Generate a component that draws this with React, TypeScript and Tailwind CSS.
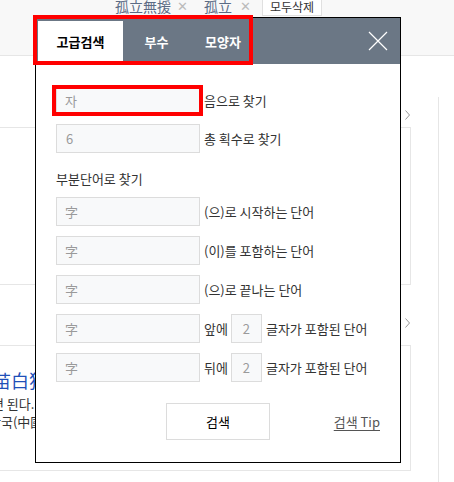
import React from 'react';

const KR = "font-['Noto_Sans_CJK_KR','Noto_Sans',sans-serif]";

const rows = [
  { label: '(으)로 시작하는 단어' },
  { label: '(이)를 포함하는 단어' },
  { label: '(으)로 끝나는 단어' },
  { label: '글자가 포함된 단어', pre: '앞에' },
  { label: '글자가 포함된 단어', pre: '뒤에' },
];

const Field: React.FC<{ value: string; className?: string }> = ({ value, className }) => (
  <div className={`h-[29px] border border-[#dcdcdc] bg-[#f8f9fa] text-[13px] text-[#9a9a9a] flex items-center ${className ?? ''}`}>
    {value}
  </div>
);

const More: React.FC = () => (
  <div className="flex items-center">
    <span className="w-[1px] h-[10px] bg-[#4a7fc1] mr-[5px]" />
    <svg width="5" height="10" viewBox="0 0 5 10">
      <path d="M0.5 0.5L4.5 5L0.5 9.5" stroke="#999" strokeWidth="1" fill="none" />
    </svg>
  </div>
);

const SearchModal: React.FC = () => (
  <div className="absolute left-[35px] top-[17px] w-[366px] h-[446px] bg-white border border-black flex flex-col">
    <div className="h-[46px] bg-[#6b7785] flex items-stretch pl-[2px] pt-[3px] pb-[2px] relative">
      <div className="w-[85px] bg-white text-black font-bold text-[13px] flex items-center justify-center">고급검색</div>
      <div className="w-[67px] text-white font-bold text-[13px] flex items-center justify-center">부수</div>
      <div className="w-[66px] text-white font-bold text-[13px] flex items-center justify-center">모양자</div>
      <svg className="absolute right-[12px] top-[13px]" width="20" height="20" viewBox="0 0 20 20">
        <path d="M1 1L19 19M19 1L1 19" stroke="white" strokeWidth="1.2" fill="none" />
      </svg>
    </div>

    <div className="flex flex-col pl-[20px] pr-[20px] pt-[22px]">
      <div className="flex items-center">
        <Field value="자" className="w-[144px] pl-[8px]" />
        <span className="ml-[4px] text-[13px] text-[#333]">음으로 찾기</span>
      </div>
      <div className="flex items-center mt-[9px]">
        <Field value="6" className="w-[144px] pl-[9px]" />
        <span className="ml-[4px] text-[13px] text-[#333]">총 획수로 찾기</span>
      </div>
      <div className="mt-[17px] text-[13px] text-[#333] leading-[18px]">부분단어로 찾기</div>
      <div className="flex flex-col gap-[10px] mt-[9px]">
        {rows.map((r, i) => (
          <div key={i} className="flex items-center">
            <Field value="字" className="w-[144px] pl-[8px] text-[12px]" />
            {r.pre ? (
              <>
                <span className="ml-[4px] text-[13px] text-[#333]">{r.pre}</span>
                <Field value="2" className="w-[31px] ml-[3px] justify-center" />
                <span className="ml-[4px] text-[13px] text-[#333]">{r.label}</span>
              </>
            ) : (
              <span className="ml-[4px] text-[13px] text-[#333]">{r.label}</span>
            )}
          </div>
        ))}
      </div>
      <div className="relative mt-[21px] flex justify-center">
        <button className="w-[104px] h-[37px] border border-[#dcdcdc] bg-white text-[13px] text-black">검색</button>
        <span className="absolute right-0 top-[9px] text-[13px] text-[#555] underline underline-offset-[3px]">검색 Tip</span>
      </div>
    </div>
  </div>
);

export default function App() {
  return (
    <div className={`relative w-[454px] h-[482px] overflow-hidden bg-white ${KR}`}>
      {/* page behind the dialog */}
      <div className="h-[60px] bg-[#f8f8f8] border-b border-[#e6e6e6]">
        <div className="flex items-start pl-[115px] -mt-[4px]">
          <span className="w-[62px] text-[14px] leading-[20px] text-[#5b6b85]">孤立無援</span>
          <span className="w-[27px] text-[13px] leading-[20px] text-[#bbb]">✕</span>
          <span className="w-[36px] text-[14px] leading-[20px] text-[#5b6b85]">孤立</span>
          <span className="w-[22px] text-[13px] leading-[20px] text-[#bbb]">✕</span>
          <span className="mt-[4px] h-[16px] w-[60px] bg-white border-x border-b border-[#e0e0e0] text-[12px] leading-[14px] text-[#333] text-center">모두삭제</span>
        </div>
      </div>
      <div className="flex">
        <div className="w-[411px] flex flex-col">
          <div className="h-[71px] flex items-end justify-end pb-[7px] pr-[1px]">
            <More />
          </div>
          <div className="h-[158px] border border-l-0 border-[#e6e6e6]" />
          <div className="h-[60px] flex items-end justify-end pb-[17px] pr-[1px]">
            <More />
          </div>
          <div className="h-[126px] border border-l-0 border-[#e6e6e6] pt-[22px] -ml-[6px]">
            <div className="text-[18px] leading-[24px] text-[#1f4fb8] -ml-[1px]">苗白狗</div>
            <div className="text-[13px] leading-[18px] text-[#333] mt-[3px] -ml-[2px]">면 된다.</div>
            <div className="text-[13px] leading-[18px] text-[#333] -ml-[5px]">한국(中國</div>
          </div>
        </div>
        <div className="ml-[27px] mt-[41px] w-[1px] h-[400px] bg-[#e6e6e6]" />
      </div>

      <SearchModal />

      {/* red annotation boxes */}
      <div className="absolute left-[33px] top-[15px] w-[220px] h-[50px] border-[4px] border-[#ff0000]" />
      <div className="absolute left-[52px] top-[85px] w-[151px] h-[31px] border-[4px] border-[#ff0000]" />
    </div>
  );
}
